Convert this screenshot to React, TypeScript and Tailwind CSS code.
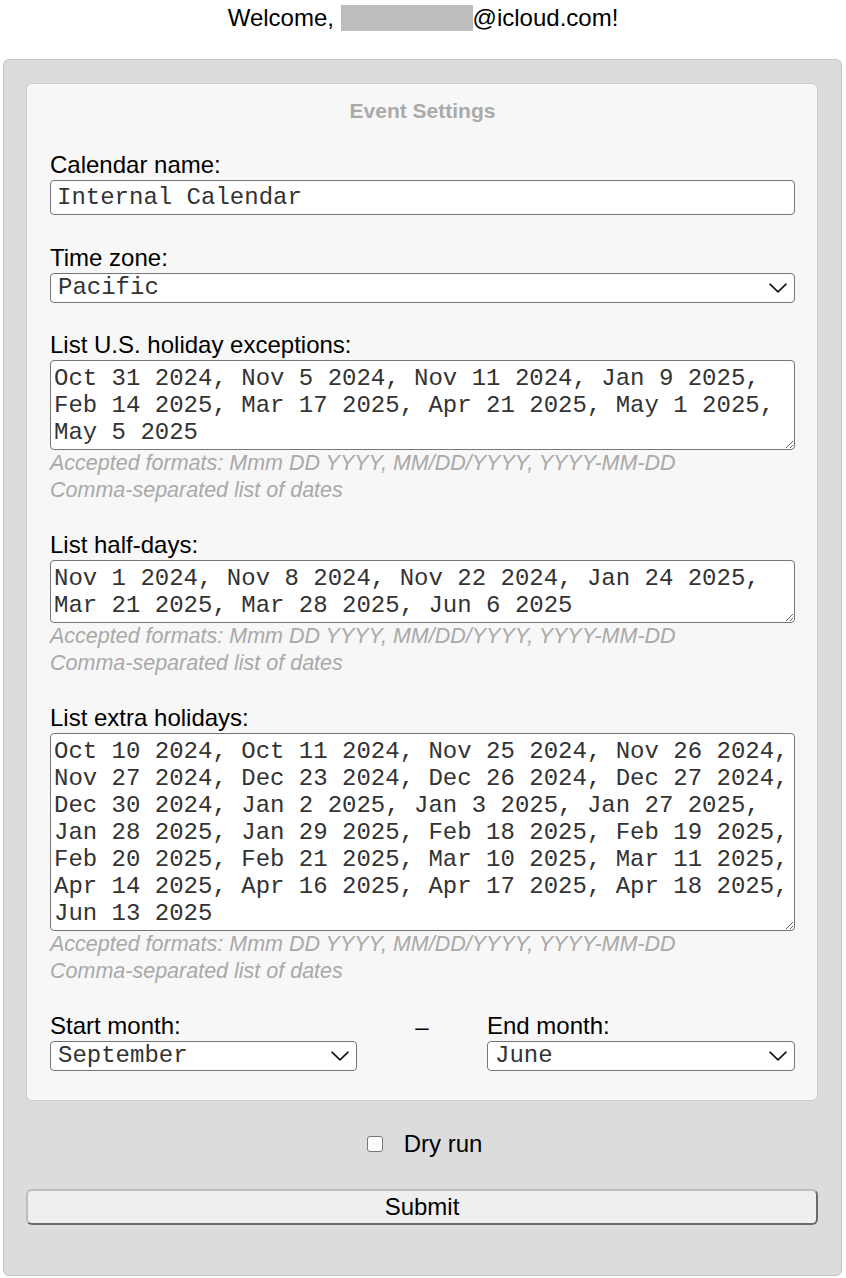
import { ChangeEvent, useState } from "react";

const sans = "font-['Liberation_Sans',Arial,sans-serif]";
const mono = "font-['Liberation_Mono','Courier_New',monospace]";

const holidayExceptions =
  "Oct 31 2024, Nov 5 2024, Nov 11 2024, Jan 9 2025,\nFeb 14 2025, Mar 17 2025, Apr 21 2025, May 1 2025,\nMay 5 2025";
const halfDays =
  "Nov 1 2024, Nov 8 2024, Nov 22 2024, Jan 24 2025,\nMar 21 2025, Mar 28 2025, Jun 6 2025";
const extraHolidays =
  "Oct 10 2024, Oct 11 2024, Nov 25 2024, Nov 26 2024,\nNov 27 2024, Dec 23 2024, Dec 26 2024, Dec 27 2024,\nDec 30 2024, Jan 2 2025, Jan 3 2025, Jan 27 2025,\nJan 28 2025, Jan 29 2025, Feb 18 2025, Feb 19 2025,\nFeb 20 2025, Feb 21 2025, Mar 10 2025, Mar 11 2025,\nApr 14 2025, Apr 16 2025, Apr 17 2025, Apr 18 2025,\nJun 13 2025";

const months = [
  "January", "February", "March", "April", "May", "June",
  "July", "August", "September", "October", "November", "December",
];

const Chevron = () => (
  <svg
    className="pointer-events-none absolute right-[8px] top-1/2 -translate-y-1/2"
    width="18"
    height="10"
    viewBox="0 0 18 10"
    fill="none"
  >
    <path d="M1 1.2 9 8.8 17 1.2" stroke="#111" strokeWidth="1.6" strokeLinecap="round" strokeLinejoin="round" />
  </svg>
);

const Select = ({ value, options }: { value: string; options: string[] }) => {
  const [v, setV] = useState(value);
  return (
    <div className="relative mt-[1px]">
      <select
        value={v}
        onChange={(e: ChangeEvent<HTMLSelectElement>) => setV(e.target.value)}
        className={`${mono} block h-[30px] w-full appearance-none rounded-[4px] border border-[#767676] bg-white pl-[7px] text-[24px] leading-[28px] text-[#333] outline-none`}
      >
        {options.map((o) => (
          <option key={o}>{o}</option>
        ))}
      </select>
      <Chevron />
    </div>
  );
};

const DateList = ({ label, value, rows, first }: { label: string; value: string; rows: number; first?: boolean }) => (
  <div className={first ? "mt-[28px]" : "mt-[27px]"}>
    <label className="block text-[24px] leading-[28px]">{label}</label>
    <textarea
      defaultValue={value}
      rows={rows}
      style={{ height: rows * 27 + 9 }}
      className={`${mono} mt-[1px] block w-full rounded-[4px] border border-[#767676] bg-white px-[3px] pb-[3px] pt-[4px] text-[24px] leading-[27px] text-[#333] outline-none`}
    />
    <p className="text-[21.5px] italic leading-[27px] text-[#a9a9a9]">
      Accepted formats: Mmm DD YYYY, MM/DD/YYYY, YYYY-MM-DD
      <br />
      Comma-separated list of dates
    </p>
  </div>
);

export default function App() {
  return (
    <div className={`${sans} min-h-[1278px] bg-white text-black`}>
      <h2 className="pt-[4px] text-center text-[24px] leading-[28px]">
        Welcome,{" "}
        <span className="inline-block h-[26px] w-[132px] bg-[#bdbdbd] align-[-5px]" />
        @icloud.com!
      </h2>

      <div className="ml-[3px] mr-[4px] mt-[27px] rounded-[6px] border border-[#c4c4c4] bg-[#dcdcdc] pb-[50px] pl-[22px] pr-[23px] pt-[23px]">
        <div className="rounded-[6px] border border-[#cdcdcd] bg-[#f7f7f7] pb-[29px] pl-[23px] pr-[22px] pt-[15px]">
          <h3 className="text-center text-[21px] font-bold leading-[24px] text-[#aaaaaa]">Event Settings</h3>

          <div className="mt-[28px]">
            <label className="block text-[24px] leading-[28px]">Calendar name:</label>
            <input
              defaultValue="Internal Calendar"
              className={`${mono} mt-[1px] block h-[35px] w-full rounded-[4px] border border-[#767676] bg-white px-[6px] text-[24px] text-[#333] outline-none`}
            />
          </div>

          <div className="mt-[29px]">
            <label className="block text-[24px] leading-[28px]">Time zone:</label>
            <Select value="Pacific" options={["Eastern", "Central", "Mountain", "Pacific"]} />
          </div>

          <DateList first label="List U.S. holiday exceptions:" value={holidayExceptions} rows={3} />
          <DateList label="List half-days:" value={halfDays} rows={2} />
          <DateList label="List extra holidays:" value={extraHolidays} rows={7} />

          <div className="mt-[27px] flex items-start justify-between">
            <div className="w-[307px]">
              <label className="block text-[24px] leading-[28px]">Start month:</label>
              <Select value="September" options={months} />
            </div>
            <span className="pt-[1px] text-[24px] leading-[28px]">–</span>
            <div className="w-[308px]">
              <label className="block text-[24px] leading-[28px]">End month:</label>
              <Select value="June" options={months} />
            </div>
          </div>
        </div>

        <label className="mt-[29px] flex items-center justify-center gap-[21px] pl-[5px] text-[24px] leading-[28px]">
          <input
            type="checkbox"
            className="h-[16px] w-[16px] appearance-none rounded-[3px] border border-[#767676] bg-white"
          />
          Dry run
        </label>

        <button
          type="button"
          className="mt-[31px] block h-[36px] w-full rounded-[6px] border-2 border-b-[#6b6b6b] border-l-[#bdbdbd] border-r-[#6b6b6b] border-t-[#bdbdbd] bg-[#efefef] text-[24px] leading-[28px] text-black"
        >
          Submit
        </button>
      </div>
    </div>
  );
}
